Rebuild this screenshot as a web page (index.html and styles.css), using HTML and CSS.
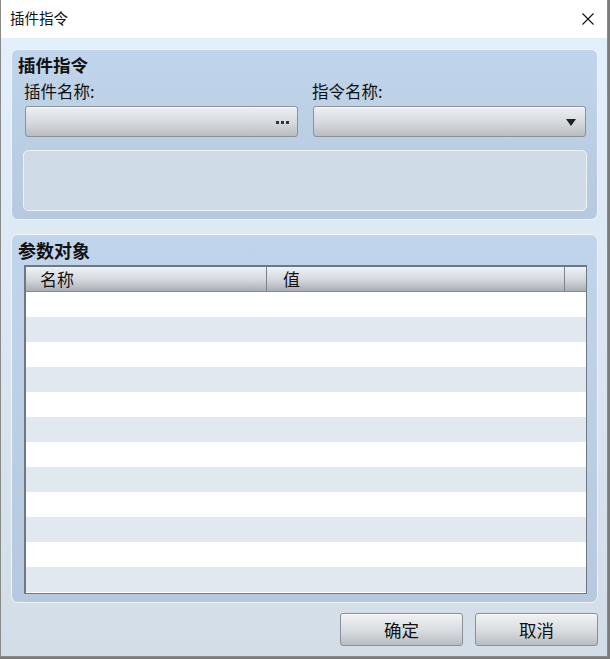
FILE: index.html
```html
<!DOCTYPE html>
<html lang="zh-CN">
<head>
<meta charset="utf-8">
<title>插件指令</title>
<link rel="stylesheet" href="styles.css">
</head>
<body>
<div class="window">
  <div class="titlebar">
    <span class="title-text">插件指令</span>
    <svg class="close" width="12" height="12" viewBox="0 0 12 12"><path d="M0.5 0.5 L11.5 11.5 M11.5 0.5 L0.5 11.5" stroke="#111" stroke-width="1.1" fill="none"/></svg>
  </div>
  <div class="body">
    <section class="panel panel-cmd">
      <div class="panel-title">插件指令</div>
      <div class="fields">
        <div class="field">
          <div class="label">插件名称:</div>
          <div class="picker">
            <span class="dots"><i></i><i></i><i></i></span>
          </div>
        </div>
        <div class="field">
          <div class="label">指令名称:</div>
          <div class="picker">
            <svg class="caret" width="10" height="7" viewBox="0 0 10 7"><path d="M0 0 H10 L5 7 Z" fill="#222"/></svg>
          </div>
        </div>
      </div>
      <div class="desc"></div>
    </section>
    <section class="panel panel-args">
      <div class="panel-title">参数对象</div>
      <div class="grid">
        <div class="grid-head">
          <div class="col col-name">名称</div>
          <div class="col col-value">值</div>
          <div class="col col-end"></div>
        </div>
        <div class="grid-body">
          <div class="row"></div><div class="row alt"></div>
          <div class="row"></div><div class="row alt"></div>
          <div class="row"></div><div class="row alt"></div>
          <div class="row"></div><div class="row alt"></div>
          <div class="row"></div><div class="row alt"></div>
          <div class="row"></div><div class="row alt"></div>
        </div>
      </div>
    </section>
    <div class="actions">
      <button class="btn">确定</button>
      <button class="btn">取消</button>
    </div>
  </div>
</div>
</body>
</html>
```
FILE: styles.css
```css
html, body {
  margin: 0;
  padding: 0;
  background: #7c7c7c;
}
body {
  width: 610px;
  height: 659px;
  overflow: hidden;
  font-family: "Noto Sans CJK SC", "Noto Sans", sans-serif;
  color: #111;
}
.window {
  box-sizing: border-box;
  width: 608px;
  height: 657px;
  border: 1px solid #8a8a8a;
  border-top: none;
  display: flex;
  flex-direction: column;
}
.titlebar {
  height: 38px;
  flex: none;
  background: #fff;
  display: flex;
  align-items: center;
  justify-content: space-between;
  padding: 0 13px 0 9px;
}
.title-text {
  font-size: 14.5px;
  line-height: 20px;
  margin-top: -2px;
}
.close {
  display: block;
}
.body {
  flex: 1;
  background: linear-gradient(#e4effc, #d2dde8);
  padding: 11px 9px 10px 10px;
  display: flex;
  flex-direction: column;
}
.panel {
  border: 1px solid #edf4fc;
  border-radius: 7px;
  background: linear-gradient(#c0d5eb, #b6c9de);
}
.panel-cmd {
  height: 171px;
  box-sizing: border-box;
  padding: 0 10px 0 11px;
}
.panel-title {
  font-weight: bold;
  font-size: 17.5px;
  line-height: 30px;
  height: 30px;
  margin-left: -5px;
}
.fields {
  display: flex;
  gap: 15px;
  margin-left: 2px;
}
.field {
  width: 273px;
}
.label {
  font-size: 16.5px;
  line-height: 24px;
  height: 24px;
  margin-left: -1px;
  margin-top: -1px;
}
.picker {
  box-sizing: border-box;
  height: 31px;
  margin-top: 3px;
  border: 1px solid #8d9197;
  border-radius: 3px;
  background: linear-gradient(#eceff3, #d5d8dc 55%, #b9bdc2);
  box-shadow: inset 0 1px 0 #f7f8fa;
  display: flex;
  align-items: center;
  justify-content: flex-end;
  padding-right: 8px;
}
.dots {
  display: flex;
  gap: 2px;
  margin-top: 1px;
}
.dots i {
  display: block;
  width: 3px;
  height: 3px;
  background: #333;
}
.caret {
  display: block;
  margin-top: 2px;
  margin-right: 1px;
}
.desc {
  box-sizing: border-box;
  height: 61px;
  margin-top: 13px;
  border: 1px solid #eef3f8;
  border-radius: 5px;
  background: #cfdbe6;
}
.panel-args {
  margin-top: 14px;
  height: 369px;
  box-sizing: border-box;
  padding: 0 10px 0 12px;
}
.panel-args .panel-title {
  font-size: 18px;
  margin-left: -6px;
  height: 29px;
  line-height: 29px;
  margin-top: 1px;
}
.grid {
  box-sizing: border-box;
  height: 329px;
  border: 1px solid #6f7780;
  border-left-width: 2px;
  border-top-width: 2px;
  background: #fff;
}
.grid-head {
  height: 24px;
  display: flex;
  background: linear-gradient(#eef1f5, #d3d7dc 55%, #a8aeb5);
  border-bottom: 1px solid #858b92;
}
.col {
  box-sizing: border-box;
  font-size: 17px;
  line-height: 24px;
  padding-left: 14px;
}
.col-name {
  width: 241px;
  border-right: 1px solid #7d848c;
}
.col-value {
  width: 298px;
  border-right: 1px solid #7d848c;
  padding-left: 16px;
}
.col-end {
  flex: 1;
}
.row {
  height: 25px;
  background: #fff;
}
.row.alt {
  background: #e1e8f0;
}
.actions {
  margin-top: auto;
  display: flex;
  justify-content: flex-end;
  gap: 12px;
}
.btn {
  box-sizing: border-box;
  width: 123px;
  height: 33px;
  border: 1px solid #8b8f95;
  border-radius: 3px;
  background: linear-gradient(#f1f2f4, #d8dbdf 55%, #b9bdc2);
  box-shadow: inset 0 1px 0 #fafbfc;
  font-family: "Noto Sans CJK SC", "Noto Sans", sans-serif;
  font-size: 17.5px;
  line-height: 31px;
  color: #111;
  padding: 0;
}
```
